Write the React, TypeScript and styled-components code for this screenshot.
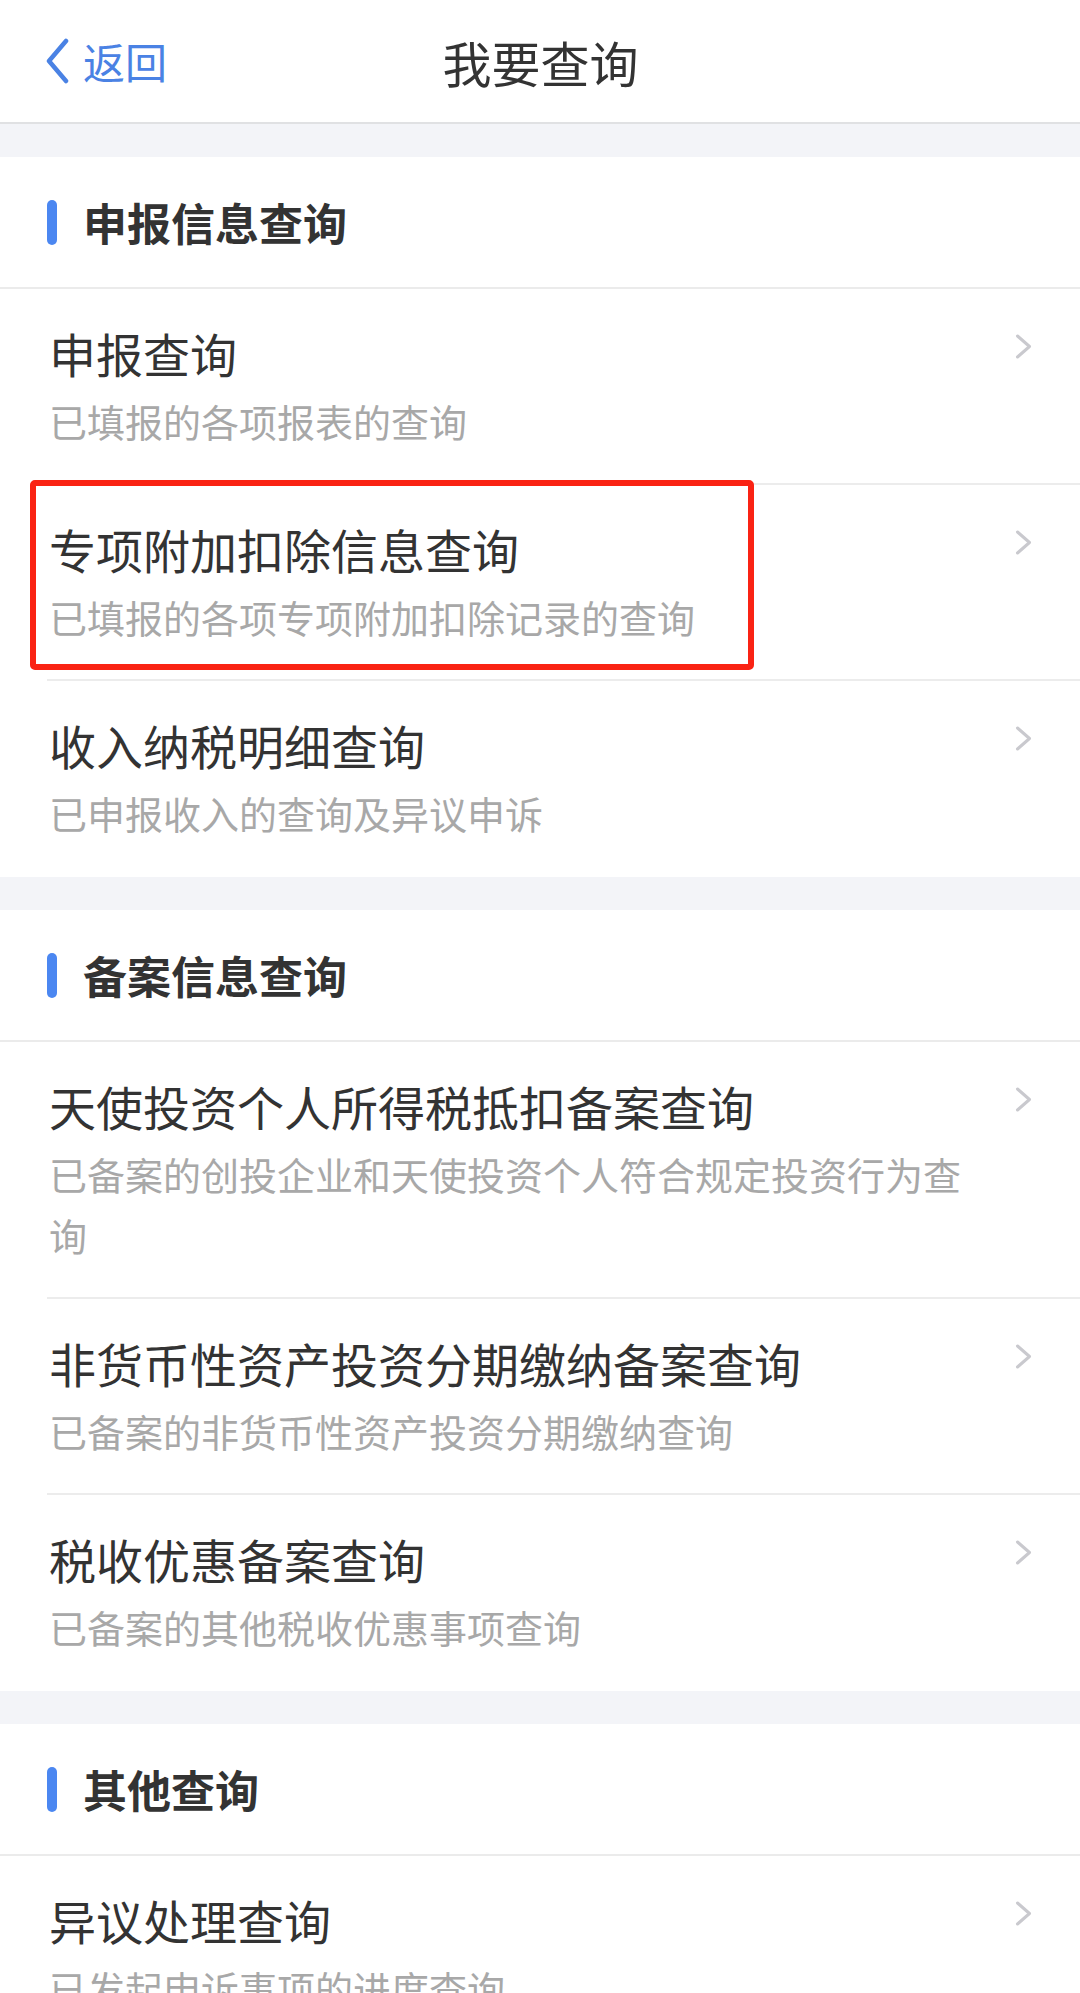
import React from "react";
import styled, { createGlobalStyle } from "styled-components";

const Global = createGlobalStyle`
  html, body { margin: 0; padding: 0; background: #ffffff; }
  body { font-family: "Noto Sans CJK SC", "Noto Sans", sans-serif; -webkit-font-smoothing: antialiased; }
  * { box-sizing: border-box; }
`;

const Page = styled.div`
  width: 1080px;
  background: #ffffff;
`;

const Header = styled.header`
  height: 124px;
  border-bottom: 2px solid #e0e1e3;
  display: grid;
  grid-template-columns: 1fr auto 1fr;
  align-items: center;
  padding: 0 0 0 45px;
`;

const Back = styled.div`
  display: flex;
  align-items: center;
  gap: 13px;
  color: #4a82e4;
  font-size: 42px;
  line-height: 1;
  justify-self: start;
`;

const Title = styled.h1`
  margin: 0;
  font-size: 49px;
  font-weight: 400;
  color: #333333;
  line-height: 1;
  transform: translateX(-22px);
`;

const Gap = styled.div`
  height: 33px;
  background: #f3f4f8;
`;

const SectionHead = styled.div`
  height: 132px;
  border-bottom: 2px solid #ebebeb;
  display: flex;
  align-items: center;
  gap: 26px;
  padding-left: 47px;
`;

const Bar = styled.span`
  width: 10px;
  height: 45px;
  border-radius: 5px;
  background: #4b87f1;
`;

const SectionTitle = styled.h2`
  margin: 0;
  font-size: 44px;
  font-weight: 700;
  color: #333333;
  line-height: 1;
`;

const List = styled.ul`
  list-style: none;
  margin: 0;
  padding: 0;
`;

const Item = styled.li`
  position: relative;
  margin-left: 47px;
  padding: 32px 48px 32px 2px;
  border-bottom: 2px solid #ececec;
  display: flex;
  gap: 36px;
  &:last-child { border-bottom-color: transparent; }
`;

const Texts = styled.div`
  flex: 1;
  min-width: 0;
`;

const ItemTitle = styled.div`
  font-size: 47px;
  line-height: 64px;
  color: #333333;
`;

const ItemSub = styled.div`
  margin-top: 5px;
  font-size: 38px;
  line-height: 61px;
  color: #a8a8a8;
`;

const Chevron = styled.svg`
  flex: none;
  margin-top: 13px;
`;

const Highlight = styled.div`
  position: absolute;
  left: -17px;
  top: -5px;
  width: 724px;
  height: 190px;
  border: 6px solid #fa2314;
  border-radius: 5px;
  pointer-events: none;
`;

type Entry = { title: string; sub: string; highlight?: boolean };
type Section = { title: string; items: Entry[] };

const sections: Section[] = [
  {
    title: "申报信息查询",
    items: [
      { title: "申报查询", sub: "已填报的各项报表的查询" },
      { title: "专项附加扣除信息查询", sub: "已填报的各项专项附加扣除记录的查询", highlight: true },
      { title: "收入纳税明细查询", sub: "已申报收入的查询及异议申诉" },
    ],
  },
  {
    title: "备案信息查询",
    items: [
      { title: "天使投资个人所得税抵扣备案查询", sub: "已备案的创投企业和天使投资个人符合规定投资行为查询" },
      { title: "非货币性资产投资分期缴纳备案查询", sub: "已备案的非货币性资产投资分期缴纳查询" },
      { title: "税收优惠备案查询", sub: "已备案的其他税收优惠事项查询" },
    ],
  },
  {
    title: "其他查询",
    items: [
      { title: "异议处理查询", sub: "已发起申诉事项的进度查询" },
    ],
  },
];

const RightArrow = () => (
  <Chevron width="17" height="25" viewBox="0 0 17 25">
    <polyline points="2.5,2 14.5,12.5 2.5,23" fill="none" stroke="#c9c9ce" strokeWidth="3" strokeLinecap="round" strokeLinejoin="round" />
  </Chevron>
);

export default function App() {
  return (
    <Page>
      <Global />
      <Header>
        <Back>
          <svg width="25" height="46" viewBox="0 0 25 46">
            <polyline points="21,3 4,23 21,43" fill="none" stroke="#4a82e4" strokeWidth="4.5" strokeLinecap="round" strokeLinejoin="round" />
          </svg>
          <span>返回</span>
        </Back>
        <Title>我要查询</Title>
        <span />
      </Header>
      {sections.map((s) => (
        <React.Fragment key={s.title}>
          <Gap />
          <SectionHead>
            <Bar />
            <SectionTitle>{s.title}</SectionTitle>
          </SectionHead>
          <List>
            {s.items.map((it) => (
              <Item key={it.title}>
                <Texts>
                  <ItemTitle>{it.title}</ItemTitle>
                  <ItemSub>{it.sub}</ItemSub>
                </Texts>
                <RightArrow />
                {it.highlight && <Highlight />}
              </Item>
            ))}
          </List>
        </React.Fragment>
      ))}
    </Page>
  );
}
